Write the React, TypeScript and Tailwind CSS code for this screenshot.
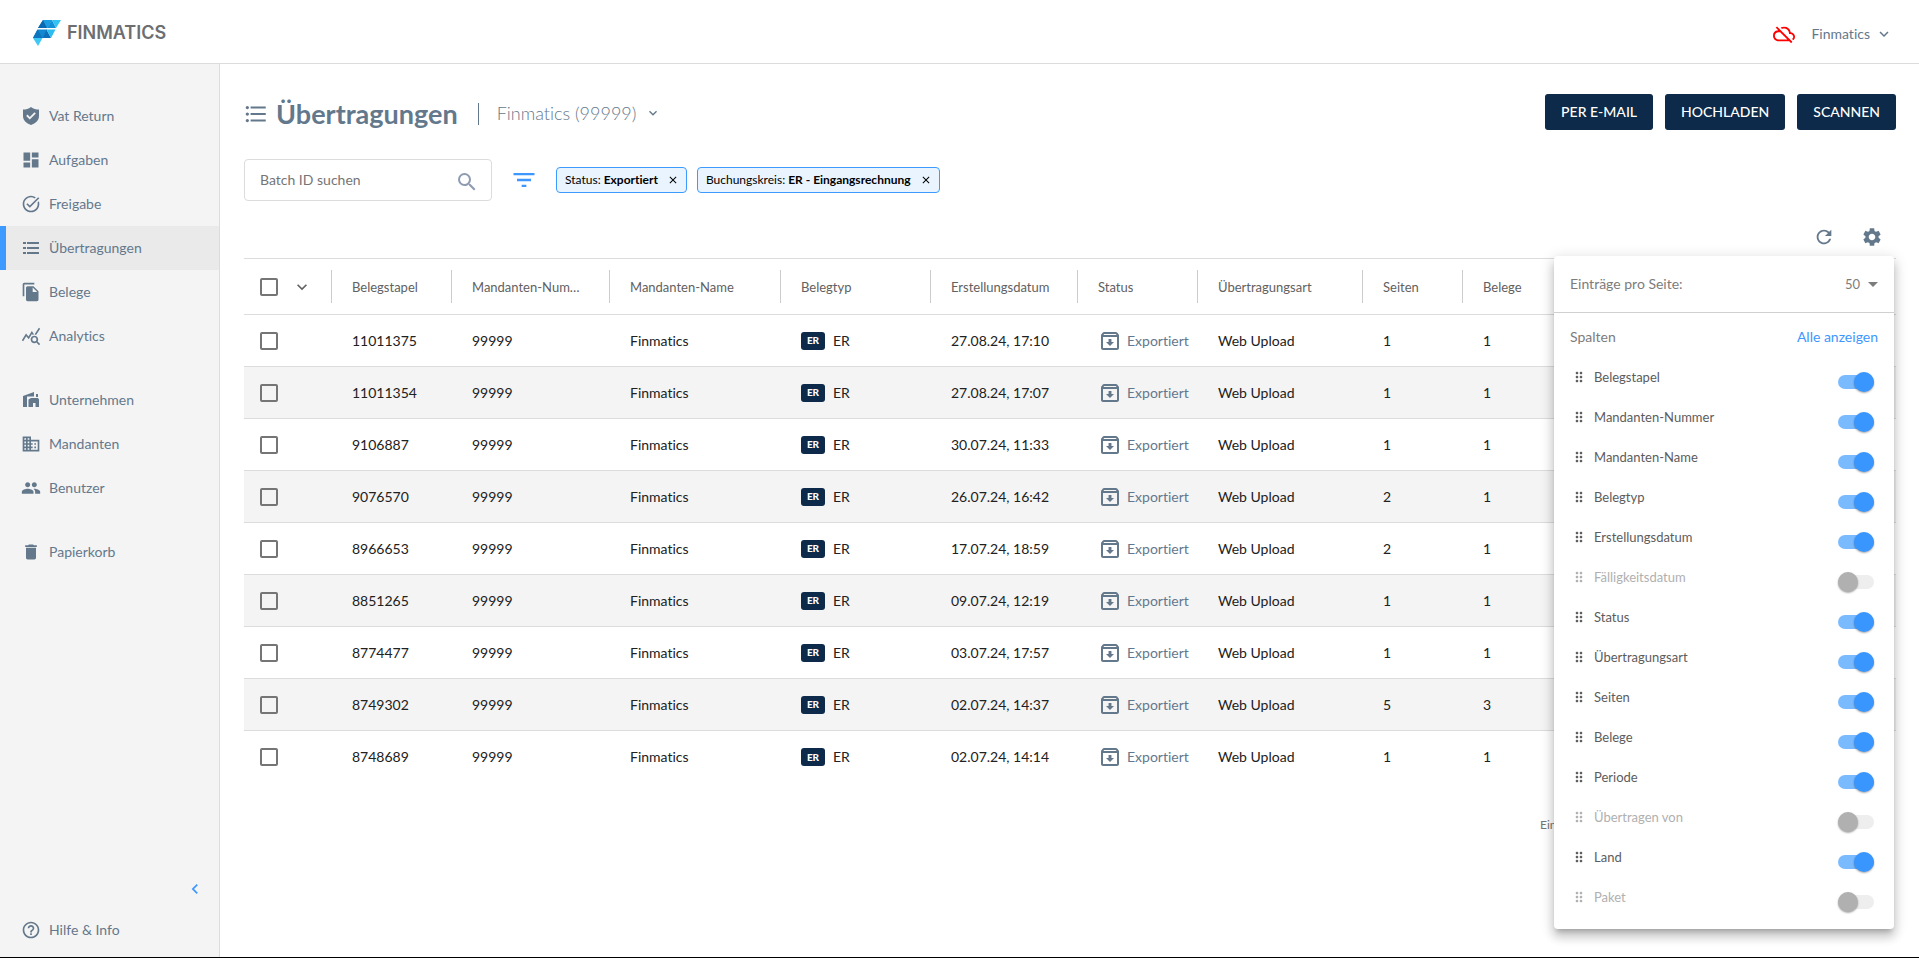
import React, { useState } from 'react';
import {
    MdArrowDropDown,
    MdChevronLeft,
    MdClose,
    MdDashboard,
    MdDelete,
    MdDomain,
    MdDragIndicator,
    MdFileCopy,
    MdFilterList,
    MdFormatListBulleted,
    MdHelpOutline,
    MdKeyboardArrowDown,
    MdOutlineArchive,
    MdOutlineCloudOff,
    MdPeople,
    MdQueryStats,
    MdRefresh,
    MdSearch,
    MdSettings,
    MdTaskAlt,
} from 'react-icons/md';

const ShieldIcon = () => (
    <svg viewBox="0 0 20 20" className="size-5" fill="currentColor">
        <path
            fillRule="evenodd"
            d="M10 1C12.500 2.800 15 3.500 18 3.600V10c0 4.200-3.200 7.400-8 9-4.800-1.600-8-4.800-8-9V3.600C5 3.500 7.500 2.800 10 1zM8.800 13.500l6-6-1.300-1.300-4.700 4.700-2.300-2.300-1.300 1.300 3.600 3.600z"
        />
    </svg>
);

const ListIcon = () => (
    <svg viewBox="0 0 20 20" className="size-5" fill="currentColor">
        <path d="M2 4h3v2H2zM2 9h3v2H2zM2 14h3v2H2zM6 4h12v2H6zM6 9h12v2H6zM6 14h12v2H6z" />
    </svg>
);

const CompanyIcon = () => (
    <svg viewBox="0 0 20 20" className="size-5" fill="currentColor">
        <path d="M2 6l11-4v4.500H6V17H2zM7.500 9.500L10 8h7l1 1.500V17h-3.500v-4H12v4H7.500zM15 4h2v3h-2z" />
    </svg>
);

const Logo = () => (
    <svg viewBox="0 0 28 26" className="h-[26px] w-7">
        <path d="M10 0h9l-5 8H5z" fill="#0f7cc4" />
        <path d="M10 0l4 8H5z" fill="#0a67b2" />
        <path d="M10 0h9l-5 8z" fill="#1b9be0" />
        <path d="M19 0l4 8h-9z" fill="#128fd6" />
        <path d="M19 0h9l-5 8z" fill="#33c3f3" />
        <path d="M4.500 9.500H14l-4 8.500H0z" fill="#1288d0" />
        <path d="M4.500 9.500L9.500 18H0z" fill="#0d74bd" />
        <path d="M13.500 9.500L18 18H9.500z" fill="#0c6fba" />
        <path d="M13.500 9.500h9L18 18z" fill="#2bbcf0" />
        <path d="M0 18h9.500L5 26z" fill="#3fc8f4" />
    </svg>
);

const navGroups = [
    [
        { label: 'Vat Return', icon: <ShieldIcon /> },
        { label: 'Aufgaben', icon: <MdDashboard size={20} /> },
        { label: 'Freigabe', icon: <MdTaskAlt size={20} /> },
        { label: 'Übertragungen', icon: <ListIcon />, active: true },
        { label: 'Belege', icon: <MdFileCopy size={20} /> },
        { label: 'Analytics', icon: <MdQueryStats size={20} /> },
    ],
    [
        { label: 'Unternehmen', icon: <CompanyIcon /> },
        { label: 'Mandanten', icon: <MdDomain size={20} /> },
        { label: 'Benutzer', icon: <MdPeople size={20} /> },
    ],
    [{ label: 'Papierkorb', icon: <MdDelete size={20} /> }],
];

const filters = [
    { name: 'Status', value: 'Exportiert' },
    { name: 'Buchungskreis', value: 'ER - Eingangsrechnung' },
];

const headers = [
    'Belegstapel',
    'Mandanten-Nummer',
    'Mandanten-Name',
    'Belegtyp',
    'Erstellungsdatum',
    'Status',
    'Übertragungsart',
    'Seiten',
    'Belege',
];

const rows = [
    { id: '11011375', date: '27.08.24, 17:10', pages: 1, docs: 1 },
    { id: '11011354', date: '27.08.24, 17:07', pages: 1, docs: 1 },
    { id: '9106887', date: '30.07.24, 11:33', pages: 1, docs: 1 },
    { id: '9076570', date: '26.07.24, 16:42', pages: 2, docs: 1 },
    { id: '8966653', date: '17.07.24, 18:59', pages: 2, docs: 1 },
    { id: '8851265', date: '09.07.24, 12:19', pages: 1, docs: 1 },
    { id: '8774477', date: '03.07.24, 17:57', pages: 1, docs: 1 },
    { id: '8749302', date: '02.07.24, 14:37', pages: 5, docs: 3 },
    { id: '8748689', date: '02.07.24, 14:14', pages: 1, docs: 1 },
];

const initialColumns = [
    { label: 'Belegstapel', visible: true },
    { label: 'Mandanten-Nummer', visible: true },
    { label: 'Mandanten-Name', visible: true },
    { label: 'Belegtyp', visible: true },
    { label: 'Erstellungsdatum', visible: true },
    { label: 'Fälligkeitsdatum', visible: false },
    { label: 'Status', visible: true },
    { label: 'Übertragungsart', visible: true },
    { label: 'Seiten', visible: true },
    { label: 'Belege', visible: true },
    { label: 'Periode', visible: true },
    { label: 'Übertragen von', visible: false },
    { label: 'Land', visible: true },
    { label: 'Paket', visible: false },
];

const checkboxClass =
    'block size-[18px] appearance-none rounded-[2px] border-2 border-[#757575] checked:bg-[#3d97ff]';

const Sidebar = () => (
    <nav className="flex w-[220px] shrink-0 flex-col border-r border-[#dcdcdc] bg-[#f4f4f4] pt-[30px] pb-[5px]">
        {navGroups.map((group, i) => (
            <ul key={i} className="mb-5">
                {group.map((item) => (
                    <li key={item.label}>
                        <a
                            href="#"
                            className={`flex h-11 items-center gap-2 border-l-[6px] pl-[15px] text-sm text-[#64788c] ${
                                item.active ? 'border-[#3d9bff] bg-[#eaeaea]' : 'border-transparent'
                            }`}
                        >
                            {item.icon}
                            {item.label}
                        </a>
                    </li>
                ))}
            </ul>
        ))}
        <button aria-label="Menü einklappen" className="mt-auto mr-[14px] mb-[9px] self-end text-[#3d97ff]">
            <MdChevronLeft size={20} />
        </button>
        <a href="#" className="flex h-11 items-center gap-2 pl-[21px] text-sm text-[#64788c]">
            <MdHelpOutline size={20} />
            Hilfe &amp; Info
        </a>
    </nav>
);

const ColumnMenu = () => {
    const [columns, setColumns] = useState(initialColumns);

    const toggle = (label: string) => {
        setColumns(columns.map((c) => (c.label === label ? { ...c, visible: !c.visible } : c)));
    };

    return (
        <div className="absolute top-[calc(100%+4px)] right-[2px] z-10 w-[340px] rounded bg-white pb-3 shadow-[0_5px_5px_-3px_rgba(0,0,0,0.2),0_8px_10px_1px_rgba(0,0,0,0.14),0_3px_14px_2px_rgba(0,0,0,0.12)]">
            <div className="flex h-[57px] items-center justify-between border-b border-[#d0d0d0] px-4 text-[#7c7c7c]">
                <label htmlFor="page-size" className="text-sm">
                    Einträge pro Seite:
                </label>
                <div className="flex items-center">
                    <select id="page-size" defaultValue="50" className="appearance-none text-[13px]">
                        <option>25</option>
                        <option>50</option>
                    </select>
                    <MdArrowDropDown size={24} className="-mr-[7px]" />
                </div>
            </div>
            <div className="flex h-11 items-center justify-between px-4 pt-1 text-sm">
                <span className="text-[#7c7c7c]">Spalten</span>
                <button
                    className="text-[#3d97ff]"
                    onClick={() => setColumns(columns.map((c) => ({ ...c, visible: true })))}
                >
                    Alle anzeigen
                </button>
            </div>
            <ul>
                {columns.map((c) => (
                    <li
                        key={c.label}
                        className={`flex h-10 items-center pr-5 pl-[17px] ${c.visible ? 'text-[#5c5c5c]' : 'text-[#b0b0b0]'}`}
                    >
                        <MdDragIndicator size={16} className="stroke-current" />
                        <label htmlFor={`col-${c.label}`} className="ml-[7px] flex-1 text-[13px]">
                            {c.label}
                        </label>
                        <input
                            id={`col-${c.label}`}
                            type="checkbox"
                            role="switch"
                            checked={c.visible}
                            onChange={() => toggle(c.label)}
                            className="mt-[10px] h-3.5 w-9 appearance-none rounded-full bg-[#eeeeee] before:block before:size-5 before:-translate-y-[3px] before:rounded-full before:bg-[#b0b0b0] before:shadow-[0_1px_2px_rgba(0,0,0,0.35)] checked:bg-[#7abaff] checked:before:translate-x-4 checked:before:bg-[#3a96ff]"
                        />
                    </li>
                ))}
            </ul>
        </div>
    );
};

const BatchTable = () => (
    <table className="w-full table-fixed border-t border-[#dcdcdc] text-left text-sm text-[#212121]">
        <colgroup>
            <col className="w-[87px]" />
            <col className="w-[120px]" />
            <col className="w-[158px]" />
            <col className="w-[171px]" />
            <col className="w-[150px]" />
            <col className="w-[147px]" />
            <col className="w-[120px]" />
            <col className="w-[165px]" />
            <col className="w-[100px]" />
            <col />
        </colgroup>
        <thead>
            <tr className="h-14 border-b border-[#dcdcdc] text-[13px] text-[#616161]">
                <th className="pl-4">
                    <div className="flex items-center gap-[14px]">
                        <input type="checkbox" aria-label="Alle auswählen" className={checkboxClass} />
                        <button aria-label="Auswahloptionen">
                            <MdKeyboardArrowDown size={20} className="stroke-current" />
                        </button>
                    </div>
                </th>
                {headers.map((h) => (
                    <th key={h} className="font-normal">
                        <div className="flex h-[33px] items-center border-l border-[#cccccc] pt-0.5 pr-5 pl-5">
                            <span className="truncate">{h}</span>
                        </div>
                    </th>
                ))}
            </tr>
        </thead>
        <tbody>
            {rows.map((r) => (
                <tr
                    key={r.id}
                    className="h-[52px] border-b border-[#dcdcdc] last:border-b-0 even:bg-[#f4f4f4]"
                >
                    <td className="pl-4">
                        <input type="checkbox" aria-label={`Stapel ${r.id} auswählen`} className={checkboxClass} />
                    </td>
                    <td className="pl-[21px]">{r.id}</td>
                    <td className="pl-[21px]">99999</td>
                    <td className="pl-[21px]">Finmatics</td>
                    <td className="pl-[21px]">
                        <div className="flex items-center gap-2">
                            <span className="flex h-[18px] w-6 items-center justify-center rounded-[3px] bg-[#0d2a4a] text-[10px] font-black text-white">
                                ER
                            </span>
                            ER
                        </div>
                    </td>
                    <td className="pl-[21px]">{r.date}</td>
                    <td className="pl-[21px] text-[#64788c]">
                        <div className="flex items-center gap-[5px]">
                            <MdOutlineArchive size={24} className="shrink-0" />
                            Exportiert
                        </div>
                    </td>
                    <td className="pl-[21px]">Web Upload</td>
                    <td className="pl-[21px]">{r.pages}</td>
                    <td className="pl-[21px]">{r.docs}</td>
                </tr>
            ))}
        </tbody>
    </table>
);

const App = () => {
    const [search, setSearch] = useState('');

    return (
        <div className="flex min-h-screen flex-col border-b border-black bg-white font-['Lato',sans-serif] text-sm [font-variant-ligatures:none]">
            <header className="flex h-16 items-center justify-between border-b border-[#dcdcdc] pr-[26px] pl-[33px]">
                <a href="#" className="flex items-center gap-[6px] pt-[3px]">
                    <Logo />
                    <span className="font-['Inter',sans-serif] text-[18px] font-semibold text-[#6d6e71]">FINMATICS</span>
                </a>
                <div className="flex items-center gap-4 pt-1 text-[#64788c]">
                    <MdOutlineCloudOff size={22} className="text-[#ff0000]" />
                    <button className="flex items-center gap-[5px]">
                        Finmatics
                        <MdKeyboardArrowDown size={18} />
                    </button>
                </div>
            </header>

            <div className="flex flex-1">
                <Sidebar />
                <main className="min-w-0 flex-1 pt-[30px] pr-[23px] pl-6">
                    <div className="flex h-9 items-center justify-between">
                        <div className="flex items-center pt-[3px] text-[#64788c]">
                            <MdFormatListBulleted size={26} className="-ml-px" />
                            <h1 className="ml-[7px] text-[27px] leading-9 font-bold">Übertragungen</h1>
                            <div className="ml-5 h-[22px] w-px bg-[#64788c]" />
                            <button className="ml-[18px] flex items-center gap-[9px] text-[18px] font-light">
                                Finmatics (99999)
                                <MdKeyboardArrowDown size={16} />
                            </button>
                        </div>
                        <div className="flex gap-3 font-medium text-white">
                            <button className="h-9 rounded-[3px] bg-[#0d2a4a] px-4">PER E-MAIL</button>
                            <button className="h-9 rounded-[3px] bg-[#0d2a4a] px-4">HOCHLADEN</button>
                            <button className="h-9 rounded-[3px] bg-[#0d2a4a] px-4">SCANNEN</button>
                        </div>
                    </div>

                    <div className="mt-[29px] flex items-center">
                        <div className="flex h-[42px] w-[248px] items-center rounded border border-[#dcdcdc] pr-3 pl-[15px]">
                            <input
                                type="text"
                                aria-label="Batch ID suchen"
                                placeholder="Batch ID suchen"
                                value={search}
                                onChange={(e) => setSearch(e.target.value)}
                                className="min-w-0 flex-1 outline-none placeholder:text-[#757575]"
                            />
                            <MdSearch size={24} className="mt-1 stroke-current text-[#8e9bb0]" />
                        </div>
                        <button aria-label="Filter" className="ml-[18px] text-[#3d97ff]">
                            <MdFilterList size={28} />
                        </button>
                        <div className="ml-[18px] flex gap-[10px]">
                            {filters.map((f) => (
                                <div
                                    key={f.name}
                                    className="flex h-[26px] items-center rounded border border-[#3d9bff] bg-[#eaf4ff] pr-[7px] pl-2 text-xs text-black"
                                >
                                    <span>
                                        {f.name}: <b>{f.value}</b>
                                    </span>
                                    <button aria-label={`${f.name} entfernen`} className="ml-[9px]">
                                        <MdClose size={12} />
                                    </button>
                                </div>
                            ))}
                        </div>
                    </div>

                    <div className="relative mt-5 flex h-[31px] items-center justify-end gap-[26px] pr-[13px] text-[#64788c]">
                        <button aria-label="Aktualisieren">
                            <MdRefresh size={22} />
                        </button>
                        <button aria-label="Einstellungen">
                            <MdSettings size={22} />
                        </button>
                        <ColumnMenu />
                    </div>

                    <div className="mt-[6px]">
                        <BatchTable />
                    </div>
                    <p className="mt-[34px] ml-auto w-[356px] text-xs text-[#757575]">Einträge 1 - 9 von 9</p>
                </main>
            </div>
        </div>
    );
};

export default App;
